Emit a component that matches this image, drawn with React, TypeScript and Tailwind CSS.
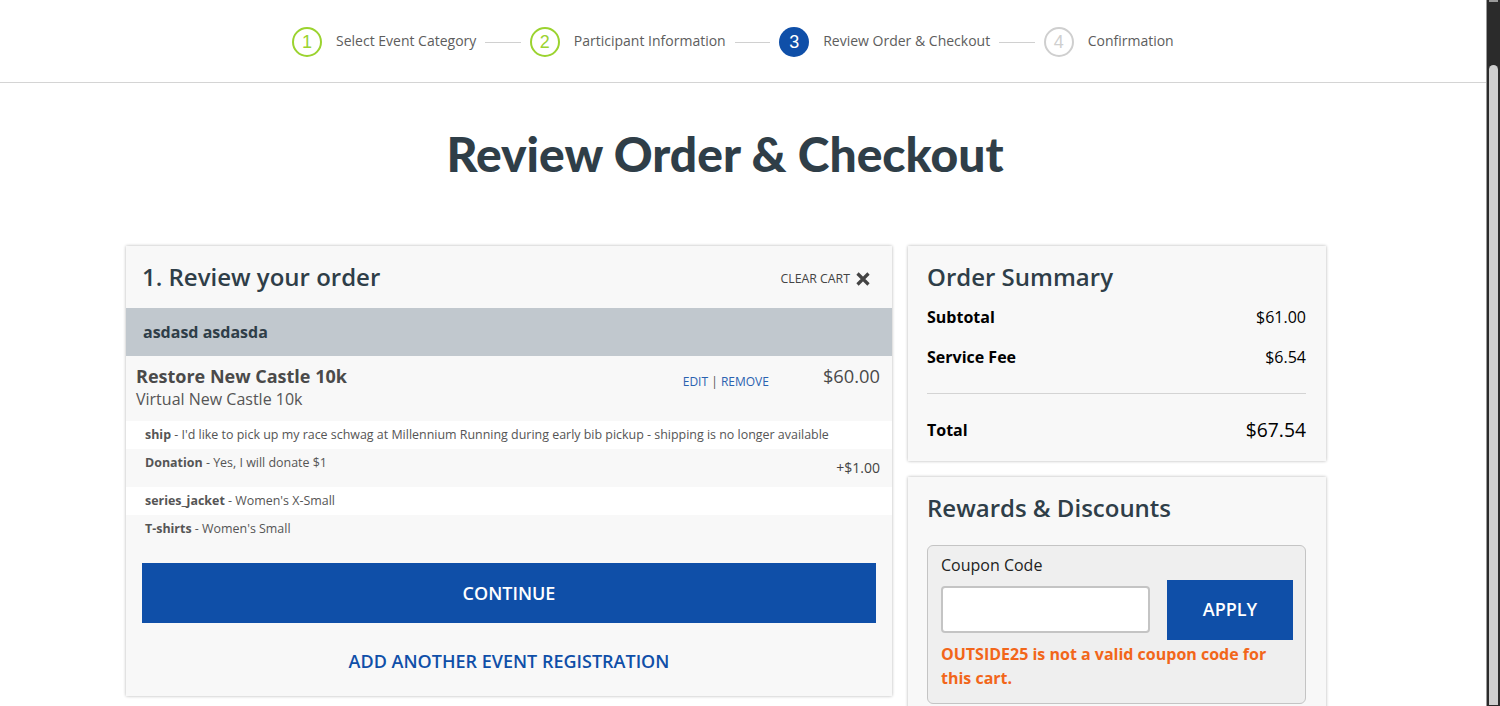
const font = "font-['Open_Sans',sans-serif]";

const steps = [
  { n: 1, label: 'Select Event Category', state: 'done' },
  { n: 2, label: 'Participant Information', state: 'done' },
  { n: 3, label: 'Review Order & Checkout', state: 'active' },
  { n: 4, label: 'Confirmation', state: 'todo' },
];

function StepCircle({ n, state }: { n: number; state: string }) {
  const look =
    state === 'done'
      ? 'border-[2.5px] border-[#9bd32f] text-[#9bd32f]'
      : state === 'active'
        ? 'bg-[#0f4fa8] text-white'
        : 'border-[2.5px] border-[#cfcfcf] text-[#cfcfcf]';
  return (
    <div className={`flex h-[30px] w-[30px] shrink-0 items-center justify-center rounded-full font-['Liberation_Sans',sans-serif] text-[18px] leading-none ${look}`}>
      {n}
    </div>
  );
}

function Stepper() {
  return (
    <header className="flex h-[83px] items-center border-b border-[#d4d4d4] pt-[2px] pl-[292px]">
      {steps.map((s, i) => (
        <div key={s.n} className="flex items-center">
          <StepCircle n={s.n} state={s.state} />
          <span className="ml-[14px] -translate-y-[2px] text-[14px] text-[#5d5d5d]">{s.label}</span>
          {i < steps.length - 1 && <div className="mx-[9px] mt-[1px] h-px w-[35.5px] bg-[#d0d0d0]" />}
        </div>
      ))}
    </header>
  );
}

function OptionRow({ name, value, extra, white, className }: { name: string; value: string; extra?: string; white?: boolean; className: string }) {
  return (
    <div className={`flex justify-between pl-[19px] pr-[12px] text-[12.45px] leading-[28px] text-[#555] ${white ? 'bg-white' : ''} ${className}`}>
      <div>
        <b className="font-bold">{name}</b> - {value}
      </div>
      {extra && <div className="mt-[5px] text-[14px] text-[#444]">{extra}</div>}
    </div>
  );
}

function ReviewCard() {
  return (
    <section className="w-[766px] shrink-0 self-start bg-[#f8f8f8] shadow-[0_0_3px_rgba(0,0,0,0.3)]">
      <div className="flex h-[62px] items-center justify-between pl-[16px] pr-[22px]">
        <h2 className="text-[24px] font-semibold text-[#2f3e48]">1. Review your order</h2>
        <button className="mt-[4px] flex items-center gap-[6px] text-[12.3px] font-normal text-[#444]">
          CLEAR CART
          <svg width="14" height="14" viewBox="0 0 14 14" className="text-[#444]">
            <path d="M1.5 1.5 L12.5 12.5 M12.5 1.5 L1.5 12.5" stroke="currentColor" strokeWidth="3.2" fill="none" />
          </svg>
        </button>
      </div>
      <div className="flex h-[48px] items-center bg-[#c1c8ce] pb-[1px] pl-[17px] text-[16px] font-bold text-[#2f3e48]">asdasd asdasda</div>
      <div className="flex h-[65px] items-start justify-between pl-[10px] pr-[12px] pt-[7px]">
        <div>
          <div className="text-[18px] font-bold leading-[26px] text-[#4a4a4a]">Restore New Castle 10k</div>
          <div className="text-[16px] leading-[20px] text-[#555]">Virtual New Castle 10k</div>
        </div>
        <div className="flex items-start">
          <div className="mr-[54px] mt-[10px] text-[12px] text-[#2a62b0]">
            EDIT <span className="text-[#555]">|</span> REMOVE
          </div>
          <div className="text-[18.3px] leading-[26px] text-[#4a4a4a]">$60.00</div>
        </div>
      </div>
      <OptionRow white name="ship" value="I'd like to pick up my race schwag at Millennium Running during early bib pickup - shipping is no longer available" className="h-[28px]" />
      <OptionRow name="Donation" value="Yes, I will donate $1" extra="+$1.00" className="h-[38px]" />
      <OptionRow white name="series_jacket" value="Women's X-Small" className="h-[28px]" />
      <OptionRow name="T-shirts" value="Women's Small" className="h-[48px]" />
      <div className="px-[16px]">
        <button className="block h-[60px] w-full bg-[#0f4fa8] text-[18px] font-semibold text-white">CONTINUE</button>
      </div>
      <div className="flex h-[73px] items-center justify-center pt-[3px] text-[18px] font-semibold text-[#0f4fa8]">ADD ANOTHER EVENT REGISTRATION</div>
    </section>
  );
}

function SummaryRow({ label, value, className }: { label: string; value: string; className: string }) {
  return (
    <div className={`flex items-center justify-between font-bold text-black ${className}`}>
      <span className="text-[16px]">{label}</span>
      <span className="font-normal">{value}</span>
    </div>
  );
}

function SideColumn() {
  return (
    <aside className="flex w-[418px] shrink-0 flex-col gap-[16px]">
      <section className="h-[215px] bg-[#f8f8f8] pl-[19px] pr-[20px] pt-[15px] shadow-[0_0_3px_rgba(0,0,0,0.3)]">
        <h2 className="text-[24px] font-semibold leading-[32px] text-[#2f3e48]">Order Summary</h2>
        <SummaryRow label="Subtotal" value="$61.00" className="mt-[12px] h-[24px] text-[16px]" />
        <SummaryRow label="Service Fee" value="$6.54" className="mt-[16px] h-[24px] text-[16px]" />
        <div className="mt-[24px] h-px bg-[#d4d4d4]" />
        <SummaryRow label="Total" value="$67.54" className="mt-[24px] h-[24px] text-[19.3px]" />
      </section>
      <section className="bg-[#f8f8f8] pl-[19px] pr-[20px] pt-[15px] pb-[20px] shadow-[0_0_3px_rgba(0,0,0,0.3)]">
        <h2 className="text-[24px] font-semibold leading-[32px] text-[#2f3e48]">Rewards &amp; Discounts</h2>
        <div className="mt-[21px] rounded-[6px] border border-[#c4c4c4] bg-[#efefef] pl-[13px] pr-[12px] pt-[7px] pb-[13px]">
          <label className="block text-[16px] leading-[24px] text-[#222]">Coupon Code</label>
          <div className="mt-[3px] flex items-start justify-between">
            <input className="mt-[6px] h-[47px] w-[209px] rounded-[4px] border-2 border-[#c4c4c4] bg-white" />
            <button className="h-[60px] w-[126px] bg-[#0f4fa8] pb-[1px] text-[18px] font-semibold text-white">APPLY</button>
          </div>
          <p className="mt-[2px] text-[16px] font-bold leading-[24px] text-[#f2661a]">OUTSIDE25 is not a valid coupon code for this cart.</p>
        </div>
      </section>
    </aside>
  );
}

function Scrollbar() {
  return (
    <div className="h-full w-[14px] shrink-0 border-l border-[#9a9a9a] bg-[#2b2b2b] px-[2px]">
      <div className="h-[2px] bg-[#9a9a9a]" />
      <div className="mt-[63px] h-[640px] rounded-t-[5px] bg-[#cfcfcf]" />
    </div>
  );
}

export default function App() {
  return (
    <div className={`flex h-[706px] w-[1500px] overflow-hidden bg-white ${font}`}>
      <main className="min-w-0 flex-1">
        <Stepper />
        <h1 className="ml-[126px] mt-[41px] w-[1198px] text-center font-['Lato',sans-serif] text-[48px] font-black leading-[60px] text-[#2f3e48]">
          Review Order &amp; Checkout
        </h1>
        <div className="ml-[126px] mt-[62px] flex gap-[16px]">
          <ReviewCard />
          <SideColumn />
        </div>
      </main>
      <Scrollbar />
    </div>
  );
}
